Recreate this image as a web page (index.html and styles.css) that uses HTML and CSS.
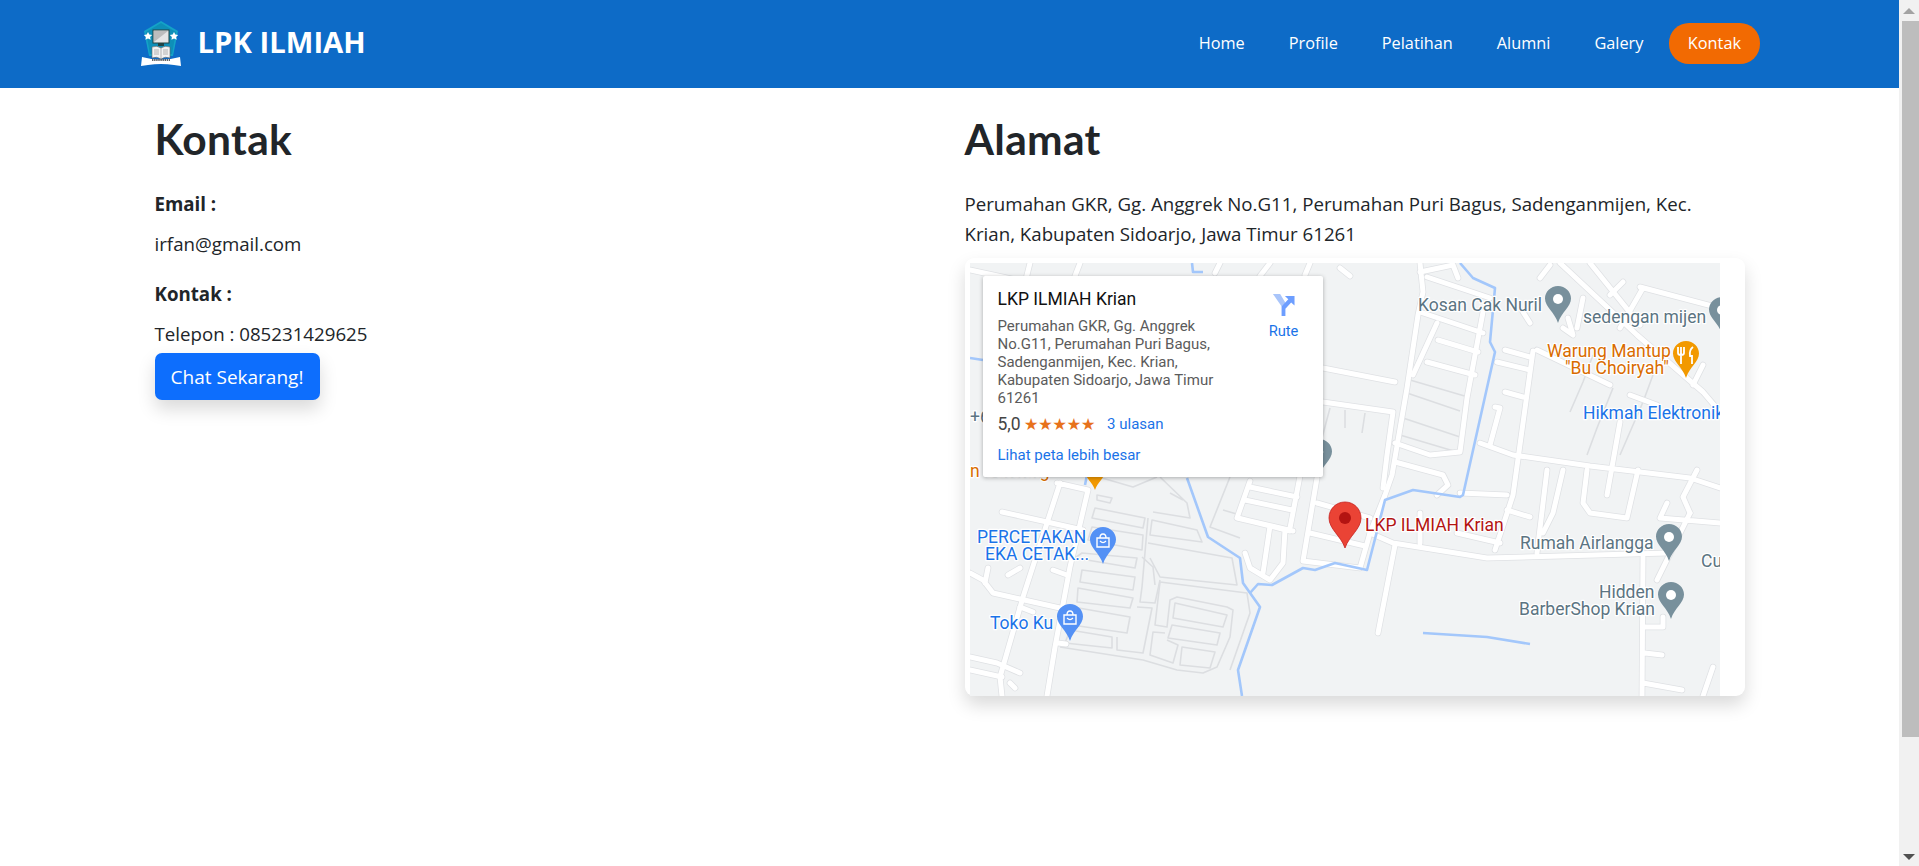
FILE: index.html
```html
<!DOCTYPE html>
<html lang="id">
<head>
<meta charset="utf-8">
<title>LPK ILMIAH - Kontak</title>
<link rel="stylesheet" href="styles.css">
</head>
<body>
<div class="window">
  <div class="page">
    <header class="topbar">
      <div class="topbar-inner">
        <a class="brand" href="#">
          <svg class="brand-logo" viewBox="0 0 40 45" aria-hidden="true">
            <path d="M20 0 L37 10 L32 35 L8 35 L3 10 Z" fill="#14a3c7"/>
            <path d="M20 2 L35 11 L31 33 L9 33 L5 11 Z" fill="#0e8fb8"/>
            <path d="M7 11 l1.3 2.6 2.9.3-2.1 2 .6 2.9-2.7-1.4-2.6 1.4.5-2.9-2.1-2 2.9-.3z" fill="#fff"/>
            <path d="M33 11 l1.3 2.6 2.9.3-2.1 2 .6 2.9-2.7-1.4-2.6 1.4.5-2.9-2.1-2 2.9-.3z" fill="#fff"/>
            <rect x="12" y="9" width="16" height="13" fill="#e6e6e6" stroke="#244" stroke-width="1"/>
            <path d="M13 10 H27 L13 21Z" fill="#bdbdbd"/>
            <rect x="17" y="22" width="6" height="3" fill="#244"/>
            <path d="M11 26 Q16 24 20 27 Q24 24 29 26 V37 Q24 35 20 38 Q16 35 11 37Z" fill="#f2f2f2" stroke="#666" stroke-width=".6"/>
            <path d="M20 27 V38 M13 29 H18 M13 31 H18 M13 33 H18 M22 29 H27 M22 31 H27 M22 33 H27" stroke="#888" stroke-width=".6"/>
            <path d="M1 36 Q20 41 39 36 L40 45 L33 44 Q20 42 7 44 L0 45Z" fill="#fff"/>
            <path d="M11 39 H29" stroke="#333" stroke-width="1.6" stroke-dasharray="1.4 .7"/>
          </svg>
          <span class="brand-name">LPK ILMIAH</span>
        </a>
        <nav class="nav">
          <a class="nav-link" href="#">Home</a>
          <a class="nav-link" href="#">Profile</a>
          <a class="nav-link" href="#">Pelatihan</a>
          <a class="nav-link" href="#">Alumni</a>
          <a class="nav-link" href="#">Galery</a>
          <a class="nav-link nav-cta" href="#">Kontak</a>
        </nav>
      </div>
    </header>

    <main class="content">
      <section class="col">
        <h1 class="title">Kontak</h1>
        <p class="label">Email :</p>
        <p class="value">irfan@gmail.com</p>
        <p class="label label-next">Kontak :</p>
        <p class="value">Telepon : 085231429625</p>
        <a class="chat-btn" href="#">Chat Sekarang!</a>
      </section>

      <section class="col">
        <h1 class="title">Alamat</h1>
        <p class="address">Perumahan GKR, Gg. Anggrek No.G11, Perumahan Puri Bagus, Sadenganmijen, Kec.<br>Krian, Kabupaten Sidoarjo, Jawa Timur 61261</p>
        <div class="map-card">
          <div class="map">
            <svg class="map-canvas" viewBox="0 0 750 433" aria-label="Peta">
              <defs>
                <g id="main-roads">
                  <path d="M450 0 453 29 448 52 437 125 422 212 415 232 400 270 423 280 517 295 697 290"/>
                  <path d="M450 9 483 2 488 15M457 14 520 35M450 49 513 70M467 60 443 112M513 49 497 135 490 189 460 192 425 180"/>
                  <path d="M468 77 508 89M457 99 505 112M425 199 473 212 478 222 467 232M353 105 425 119M353 139 423 149 417 192 413 225"/>
                  <path d="M590 0 667 72 733 129 750 149M620 0 670 62"/>
                  <path d="M563 88 543 232 525 287M567 87 640 122M527 99 560 107M535 87 560 94M535 129 553 134M525 144 530 145 520 182"/>
                  <path d="M510 180 543 192 620 203 720 215 750 225M650 159 637 232M673 25 650 65M670 24 750 45M613 35 607 65"/>
                  <path d="M553 49 560 60M593 65 603 72 598 55M580 2 570 15M653 19 640 32M660 132 687 142M733 102 723 122"/>
                  <path d="M425 282 408 370M490 230 537 232M537 247 560 254M450 250 450 280M487 270 530 280"/>
                  <path d="M577 207 567 290M593 207 583 250 573 270M617 207 613 240 620 250 657 255 668 207M697 240 690 255 750 260M720 250 687 317"/>
                  <path d="M673 294 672 433M675 364 693 364 693 354M675 390 692 392M673 420 712 427M743 404 733 433M727 207 713 234 720 250"/>
                  <path d="M87 220 118 227 100 304 85 384 77 433M90 220 53 334 30 414 32 433M32 249 113 267"/>
                  <path d="M0 310 13 317 23 330 90 345M18 305 15 320M0 394 27 400 50 410M0 407 32 414M50 305 38 312M83 307 97 312M50 344 63 349M88 380 96 381M40 420 45 425"/>
                  <path d="M280 218 267 255 323 268M280 224 327 234M275 237 322 247M268 255 320 268M330 213 320 265M275 290 280 305 300 317 313 300 315 267M293 310 300 263"/>
                  <path d="M347 215 333 298 390 305 400 270M347 240 400 255M340 270 395 283"/>
                  <path d="M0 7 60 20M60 0 55 20M110 0 105 13M250 0 245 10M300 0 290 13M340 0 335 12M370 5 380 13"/>
                </g>
                <g id="minor-roads">
                  <path d="M127 232 142 235 140 240 127 237ZM125 245 175 255 173 265 122 255ZM182 257 227 267 232 279 180 272ZM122 264 173 272 172 287 118 277Z"/>
                  <path d="M178 255 172 324 170 339 185 340 190 317M112 290 167 295 165 305 105 295ZM112 307 165 314 163 327 110 319ZM108 325 163 335 160 345 107 339ZM103 344 160 354 157 370 102 362ZM100 367 142 374 142 385 95 380Z"/>
                  <path d="M147 374 147 387 173 390 182 345 167 344M172 294 183 304 185 322M180 295 190 314 267 322 262 295 178 280M190 319 277 330 280 350 260 407"/>
                  <path d="M190 319 185 362 197 364 200 337 207 334 257 344 263 347 260 374 247 404 233 410 207 407 173 397 90 384"/>
                  <path d="M205 340 257 352 253 364 203 355ZM202 362 250 370 247 382 198 375ZM197 377 208 382 203 400 180 392 183 369 195 370M212 384 245 389 240 405 210 402Z"/>
                  <path d="M132 215 163 224 187 214M190 214 217 240 220 255 183 249M200 230 213 237M260 214 240 264 270 275M253 247 270 252"/>
                  <path d="M440 117 498 134M437 130 490 148M433 155 490 174M430 172 487 189M360 145 352 175M375 147 375 165M395 150 392 170M600 149 613 119 623 92M643 125 627 165 617 192M683 112 673 139 650 192"/>
                </g>
              </defs>
              <rect class="map-land" width="750" height="433"/>
              <use href="#minor-roads" class="road-minor"/>
              <use href="#main-roads" class="road-casing"/>
              <use href="#main-roads" class="road-fill"/>

              <path class="water" d="M490 0 503 15 525 25 520 79 525 89 493 232 490 234 443 227 415 237 397 307 365 300 345 307 333 305 302 322 288 321 280 330"/>
              <path class="water" d="M217 215 238 274 270 295 273 320 290 344 268 407 272 433"/>
              <path class="water" d="M222 0 223 9 233 9M0 95 13 97M117 212 115 222M453 370 517 374 560 381"/>

              <symbol id="pin" viewBox="0 0 26 37">
                <path d="M13 0 C5.8 0 0 5.6 0 12.6 C0 21 9.5 26 13 37 C16.5 26 26 21 26 12.6 C26 5.6 20.2 0 13 0Z"/>
              </symbol>

              <g class="pin-grey">
                <use href="#pin" x="575" y="23" width="26" height="37"/>
                <use href="#pin" x="739" y="34" width="26" height="37"/>
                <use href="#pin" x="336" y="176" width="26" height="37"/>
                <use href="#pin" x="686" y="261" width="26" height="37"/>
                <use href="#pin" x="688" y="319" width="26" height="37"/>
              </g>
              <g class="pin-dot">
                <circle cx="588" cy="36" r="5"/><circle cx="752" cy="47" r="5"/>
                <circle cx="699" cy="274" r="5"/><circle cx="701" cy="332" r="5"/>
              </g>
              <path class="pin-cap" d="M345 189 l4-2 5 2-5 2z M346 191 v2 q3 2 6 0 v-2"/>

              <g class="pin-orange">
                <use href="#pin" x="703" y="78" width="26" height="37"/>
                <use href="#pin" x="112" y="200" width="26" height="27"/>
              </g>
              <path class="pin-fork" d="M708 84 v6 q0 2 3 2 v9 M714 84 v6 q0 2-3 2M711 84 v8 M723 84 q-4 3-3 9 h2 v8"/>

              <g class="pin-blue">
                <use href="#pin" x="120" y="264" width="26" height="37"/>
                <use href="#pin" x="87" y="341" width="26" height="37"/>
              </g>
              <path class="pin-bag" d="M127 275 h12 v9 h-12z M130 275 q0-4 3-4 q3 0 3 4M94 352 h12 v9 h-12z M97 352 q0-4 3-4 q3 0 3 4"/>
              <path class="pin-smile" d="M130 278 q3 3 6 0M97 355 q3 3 6 0"/>

              <path class="pin-red" d="M375 239 C366 239 359 246 359 255 C359 266 371 273 375 285 C379 273 391 266 391 255 C391 246 384 239 375 239Z"/>
              <circle class="pin-red-dot" cx="375" cy="255" r="6"/>

              <g class="labels">
                <text class="lbl lbl-grey" x="448" y="48">Kosan Cak Nuril</text>
                <text class="lbl lbl-grey" x="613" y="60">sedengan mijen</text>
                <text class="lbl lbl-orange" x="577" y="94">Warung Mantup</text>
                <text class="lbl lbl-orange" x="595" y="111">"Bu Choiryah"</text>
                <text class="lbl lbl-blue" x="613" y="156">Hikmah Elektronik</text>
                <text class="lbl lbl-blue" x="7" y="280">PERCETAKAN</text>
                <text class="lbl lbl-blue" x="15" y="297">EKA CETAK...</text>
                <text class="lbl lbl-blue" x="20" y="366">Toko Ku</text>
                <text class="lbl lbl-red" x="395" y="268">LKP ILMIAH Krian</text>
                <text class="lbl lbl-grey" x="550" y="286">Rumah Airlangga</text>
                <text class="lbl lbl-grey" x="731" y="304">Cu</text>
                <text class="lbl lbl-grey" x="629" y="335">Hidden</text>
                <text class="lbl lbl-grey" x="549" y="352">BarberShop Krian</text>
                <text class="lbl lbl-grey" x="0" y="160">+6</text>
                <text class="lbl lbl-orange" x="0" y="214">n Catering</text>
              </g>
            </svg>
            <div class="place-card">
              <div class="place-main">
                <div class="place-name">LKP ILMIAH Krian</div>
                <div class="place-address">Perumahan GKR, Gg. Anggrek<br>No.G11, Perumahan Puri Bagus,<br>Sadenganmijen, Kec. Krian,<br>Kabupaten Sidoarjo, Jawa Timur<br>61261</div>
                <div class="place-rating">
                  <span class="score">5,0</span>
                  <span class="stars">★★★★★</span>
                  <a class="place-link reviews" href="#">3 ulasan</a>
                </div>
                <a class="place-link bigger" href="#">Lihat peta lebih besar</a>
              </div>
              <a class="route" href="#">
                <svg class="route-icon" viewBox="0 0 24 24" aria-hidden="true">
                  <path class="route-light" d="M1 1 H8.5 L14.5 11 L11 15.5 Z"/>
                  <path class="route-dark" d="M10 14 L17 6.5 L13.5 3 H23.5 V13 L20 9.8 L14 16.5 V24 H10Z"/>
                </svg>
                <span>Rute</span>
              </a>
            </div>
          </div>
        </div>
      </section>
    </main>
  </div>

  <div class="scrollbar" aria-hidden="true">
    <span class="arrow arrow-up"></span>
    <span class="thumb"></span>
    <span class="track"></span>
    <span class="arrow arrow-down"></span>
  </div>
</div>
</body>
</html>
```

FILE: styles.css
```css
* { box-sizing: border-box; }

html, body {
  margin: 0;
  height: 866px;
  overflow: hidden;
  background: #fff;
}

body {
  font-family: "Open Sans", "Noto Sans", sans-serif;
  font-size: 18.7px;
  color: #212529;
}

a { text-decoration: none; }

.window {
  display: flex;
  height: 866px;
}

.page {
  flex: 1;
  min-width: 0;
}

/* header */
.topbar {
  height: 88px;
  background: #0d6bc7;
}

.topbar-inner {
  width: 1620px;
  height: 88px;
  margin: 0 auto;
  padding: 0 0 2px 1px;
  display: flex;
  align-items: center;
  justify-content: space-between;
}

.brand {
  display: flex;
  align-items: center;
  gap: 17px;
}

.brand-logo {
  width: 40px;
  height: 45px;
}

.brand-name {
  font-size: 29.3px;
  font-weight: 700;
  color: #fff;
  line-height: 1;
}

.nav {
  display: flex;
  align-items: center;
}

.nav-link {
  padding: 0 22px;
  font-size: 16.3px;
  line-height: 41px;
  color: #fff;
}

.nav-cta {
  margin-left: 4px;
  padding: 0 18.5px;
  background: #f26a02;
  border-radius: 20px;
}

/* content */
.content {
  width: 1620px;
  margin: 0 auto;
  display: grid;
  grid-template-columns: 1fr 1fr;
}

.col {
  padding: 0 15px;
}

.title {
  margin: 26px 0 0;
  font-family: "Lato", "Open Sans", sans-serif;
  font-size: 42.5px;
  font-weight: 700;
  line-height: 50px;
  letter-spacing: .3px;
  color: #212529;
}

.label, .value, .address {
  margin: 0;
  line-height: 30px;
}

.label {
  margin-top: 25px;
  font-weight: 700;
}

.value { margin-top: 10px; }

.label.label-next { margin-top: 20px; }

.chat-btn {
  display: block;
  width: 165px;
  height: 47px;
  margin-top: 4px;
  background: #0d6efd;
  border-radius: 7px;
  box-shadow: 0 9px 18px rgba(0, 0, 0, .15);
  color: #fff;
  font-size: 19px;
  line-height: 49px;
  text-align: center;
}

.address {
  margin-top: 25px;
}

/* map */
.map-card {
  margin-top: 9px;
  height: 438px;
  padding: 5px 0 0 5px;
  background: #fff;
  border-radius: 9px;
  box-shadow: 0 9px 18px rgba(0, 0, 0, .15);
}

.map {
  position: relative;
  width: 750px;
  height: 433px;
  overflow: hidden;
}

.map-canvas {
  display: block;
  width: 750px;
  height: 433px;
}

.map-land { fill: #f1f3f4; }

.road-casing {
  fill: none;
  stroke: #dfe1e4;
  stroke-width: 6.5;
  stroke-linecap: round;
  stroke-linejoin: round;
}

.road-fill {
  fill: none;
  stroke: #fff;
  stroke-width: 5;
  stroke-linecap: round;
  stroke-linejoin: round;
}

.road-minor {
  fill: none;
  stroke: #dcdee1;
  stroke-width: 1.6;
  stroke-linejoin: round;
}

.water {
  fill: none;
  stroke: #a3c7fb;
  stroke-width: 2.6;
  stroke-linejoin: round;
}

.pin-grey { fill: #78909c; }
.pin-dot { fill: #fff; }
.pin-cap { fill: #fff; }
.pin-orange { fill: #f29900; }
.pin-blue { fill: #5491f5; }
.pin-fork { fill: none; stroke: #fff; stroke-width: 1.8; }
.pin-bag { fill: none; stroke: #fff; stroke-width: 1.4; }
.pin-smile { fill: none; stroke: #fff; stroke-width: 1.2; }
.pin-red { fill: #ea4335; stroke: #c5221f; stroke-width: .8; }
.pin-red-dot { fill: #b31412; }

.lbl {
  font-family: "Roboto", sans-serif;
  font-size: 17.5px;
  paint-order: stroke;
  stroke: #fff;
  stroke-width: 2.5px;
  stroke-linejoin: round;
}

.lbl-grey { fill: #5b7482; }
.lbl-orange { fill: #d96c00; }
.lbl-blue { fill: #1a73e8; }
.lbl-red { fill: #b31412; }

.place-card {
  position: absolute;
  left: 13px;
  top: 13px;
  width: 340px;
  height: 201px;
  padding: 12px 15px;
  display: flex;
  justify-content: space-between;
  background: #fff;
  border-radius: 2px;
  box-shadow: 0 1px 4px rgba(0, 0, 0, .3);
  font-family: "Roboto", sans-serif;
}

.place-name {
  font-size: 17.5px;
  font-weight: 400;
  line-height: 22px;
  color: #111;
}

.place-address {
  margin-top: 7px;
  font-size: 15px;
  line-height: 18px;
  color: #5b5b5b;
}

.place-rating {
  display: flex;
  align-items: center;
  margin-top: 6px;
  height: 22px;
}

.score {
  font-size: 17.5px;
  color: #444;
}

.stars {
  margin-left: 3px;
  font-family: "DejaVu Sans", sans-serif;
  font-size: 16.5px;
  letter-spacing: -.5px;
  color: #e7711b;
}

.place-link {
  color: #1a73e8;
  font-size: 15px;
}

.reviews { margin-left: 12px; }

.bigger {
  display: block;
  margin-top: 11px;
  line-height: 18px;
}

.route {
  width: 46px;
  margin: 5px 1px 0 0;
  display: flex;
  flex-direction: column;
  align-items: center;
  color: #1a73e8;
  font-size: 14.7px;
}

.route-icon {
  width: 23px;
  height: 23px;
}

.route-light { fill: #a9c5fa; }
.route-dark { fill: #6d9eff; }

.route span { margin-top: 6px; }

/* scrollbar */
.scrollbar {
  width: 20px;
  background: #f1f1f1;
  display: flex;
  flex-direction: column;
  align-items: center;
}

.arrow {
  width: 0;
  height: 0;
  border-left: 6px solid transparent;
  border-right: 6px solid transparent;
}

.arrow-up {
  margin-top: 8px;
  border-bottom: 6px solid #a3a3a3;
}

.thumb {
  width: 17px;
  height: 716px;
  margin: 7px 0 0 2px;
  background: #bdbdbd;
}

.track { flex: 1; }

.arrow-down {
  margin-bottom: 6px;
  border-top: 6px solid #505050;
}
```
